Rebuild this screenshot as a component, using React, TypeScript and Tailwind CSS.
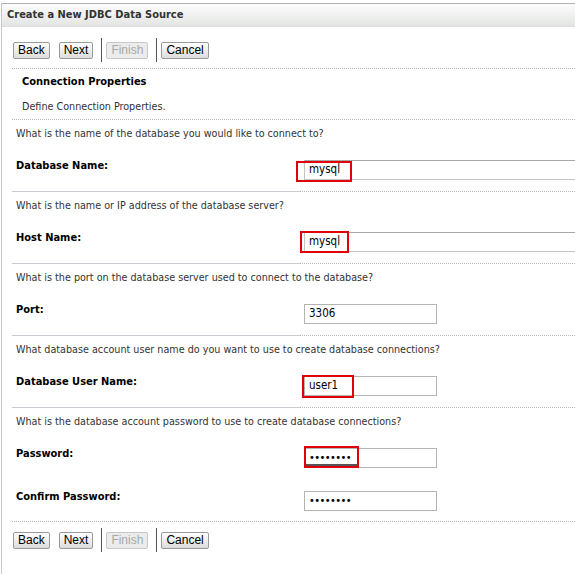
import React from "react";

const FONT = "font-['DejaVu_Sans_Condensed','DejaVu_Sans',sans-serif]";
const BTN_FONT = "font-['Liberation_Sans',Arial,sans-serif]";

function Btn({ label, disabled }: { label: string; disabled?: boolean }) {
  return (
    <div
      className={`${BTN_FONT} h-[17px] px-[4px] flex items-center text-[12px] leading-none rounded-[2px] border ${
        disabled
          ? "border-[#c8c8c8] bg-[#ececec] text-[#a8a8a8]"
          : "border-[#9a9a9a] bg-gradient-to-b from-[#ffffff] to-[#dcdcdc] text-black"
      }`}
    >
      {label}
    </div>
  );
}

function ButtonBar() {
  return (
    <div className="flex items-center">
      <div className="ml-[1px]">
        <Btn label="Back" />
      </div>
      <div className="ml-[9px]">
        <Btn label="Next" />
      </div>
      <div className="ml-[8px] mr-[4px] w-px h-[24px] bg-[#555]" />
      <Btn label="Finish" disabled />
      <div className="ml-[8px] mr-[4px] w-px h-[24px] bg-[#555]" />
      <Btn label="Cancel" />
    </div>
  );
}

type Field = {
  label: string;
  value: string;
  wide?: boolean;
  password?: boolean;
  mark?: string; // red annotation box
};

function Input({ f }: { f: Field }) {
  return (
    <div className="relative">
      <div
        className={`h-[20px] flex items-center pl-[4px] text-[11.5px] text-black ${
          f.wide
            ? "w-[300px] border-t border-b border-l border-t-[#a8a8a8] border-b-[#c4c4c4] border-l-[#c4c4c4]"
            : "w-[133px] border border-[#b4b4b0]"
        }`}
      >
        {f.password ? (
          <span className="text-[11px] tracking-[-0.6px] text-black">••••••••</span>
        ) : (
          f.value
        )}
      </div>
      {f.mark && <div className={`absolute border-2 border-[#e0000a] ${f.mark}`} />}
    </div>
  );
}

function PasswordRow({ f }: { f: Field }) {
  return (
    <div className="flex h-[42px]">
      <div className="w-[288px] shrink-0 pl-[4px] pt-[10px] leading-[16px] text-[11px] font-bold text-black">
        {f.label}
      </div>
      <div className="flex-1 pt-[12px] pl-[4px]">
        <Input f={f} />
      </div>
    </div>
  );
}

const sections: { question: string; field: Field }[] = [
  {
    question: "What is the name of the database you would like to connect to?",
    field: {
      label: "Database Name:",
      value: "mysql",
      wide: true,
      mark: "left-[-8px] top-[1px] w-[56px] h-[21px]",
    },
  },
  {
    question: "What is the name or IP address of the database server?",
    field: {
      label: "Host Name:",
      value: "mysql",
      wide: true,
      mark: "left-[-4px] top-[-1px] w-[49px] h-[22px]",
    },
  },
  {
    question: "What is the port on the database server used to connect to the database?",
    field: { label: "Port:", value: "3306" },
  },
  {
    question:
      "What database account user name do you want to use to create database connections?",
    field: {
      label: "Database User Name:",
      value: "user1",
      mark: "left-[-2px] top-[-1px] w-[52px] h-[23px]",
    },
  },
];

export default function App() {
  return (
    <div className={`${FONT} w-[575px] h-[574px] bg-white overflow-hidden`}>
      <div className="mt-[3px] ml-[1px] h-[571px] border-l border-t border-l-[#c4c8cc] border-t-[#b0b0b0]">
        {/* header */}
        <div className="h-[23px] flex items-center pl-[5px] pt-[1px] bg-gradient-to-b from-[#fcfcfc] to-[#e3e5e3] border-b border-[#dcdedc] text-[11px] font-bold text-[#333]">
          Create a New JDBC Data Source
        </div>

        <div className="ml-[10px]">
          <div className="h-[42px] pt-[5px] flex items-center border-b border-dotted border-[#b8b8b8]">
            <ButtonBar />
          </div>

          <div className="h-[51px] border-b border-dotted border-[#b8b8b8]">
            <div className="h-[26px] flex items-center pl-[10px] text-[11px] font-bold text-black">
              Connection Properties
            </div>
            <div className="h-[24px] flex items-center pl-[10px] text-[10.7px] text-[#333]">
              Define Connection Properties.
            </div>
          </div>

          {sections.map((s) => (
            <div key={s.question}>
              <div className="h-[28px] flex items-center pl-[4px] text-[10.7px] text-[#333] whitespace-nowrap">
                {s.question}
              </div>
              <div className="flex h-[44px]">
                <div className="w-[288px] shrink-0 border-b border-[#c8ccd0]">
                  <div className="pl-[4px] pt-[10px] leading-[16px] text-[11px] font-bold text-black">
                    {s.field.label}
                  </div>
                </div>
                <div className="flex-1 min-w-0 pt-[12px] pl-[4px] border-b border-dotted border-[#b8b8b8]">
                  <Input f={s.field} />
                </div>
              </div>
            </div>
          ))}

          <div className="border-b border-dotted border-[#b8b8b8]">
            <div className="h-[28px] flex items-center pl-[4px] text-[10.7px] text-[#333] whitespace-nowrap">
              What is the database account password to use to create database connections?
            </div>
            <PasswordRow
              f={{
                label: "Password:",
                value: "",
                password: true,
                mark: "left-[0px] top-[-2px] w-[55px] h-[22px] shadow-[inset_0_-2px_0_#555]",
              }}
            />
            <div className="h-[1px]" />
            <PasswordRow f={{ label: "Confirm Password:", value: "", password: true }} />
          </div>

          <div className="h-[36px] flex items-center">
            <ButtonBar />
          </div>
        </div>
      </div>
    </div>
  );
}
